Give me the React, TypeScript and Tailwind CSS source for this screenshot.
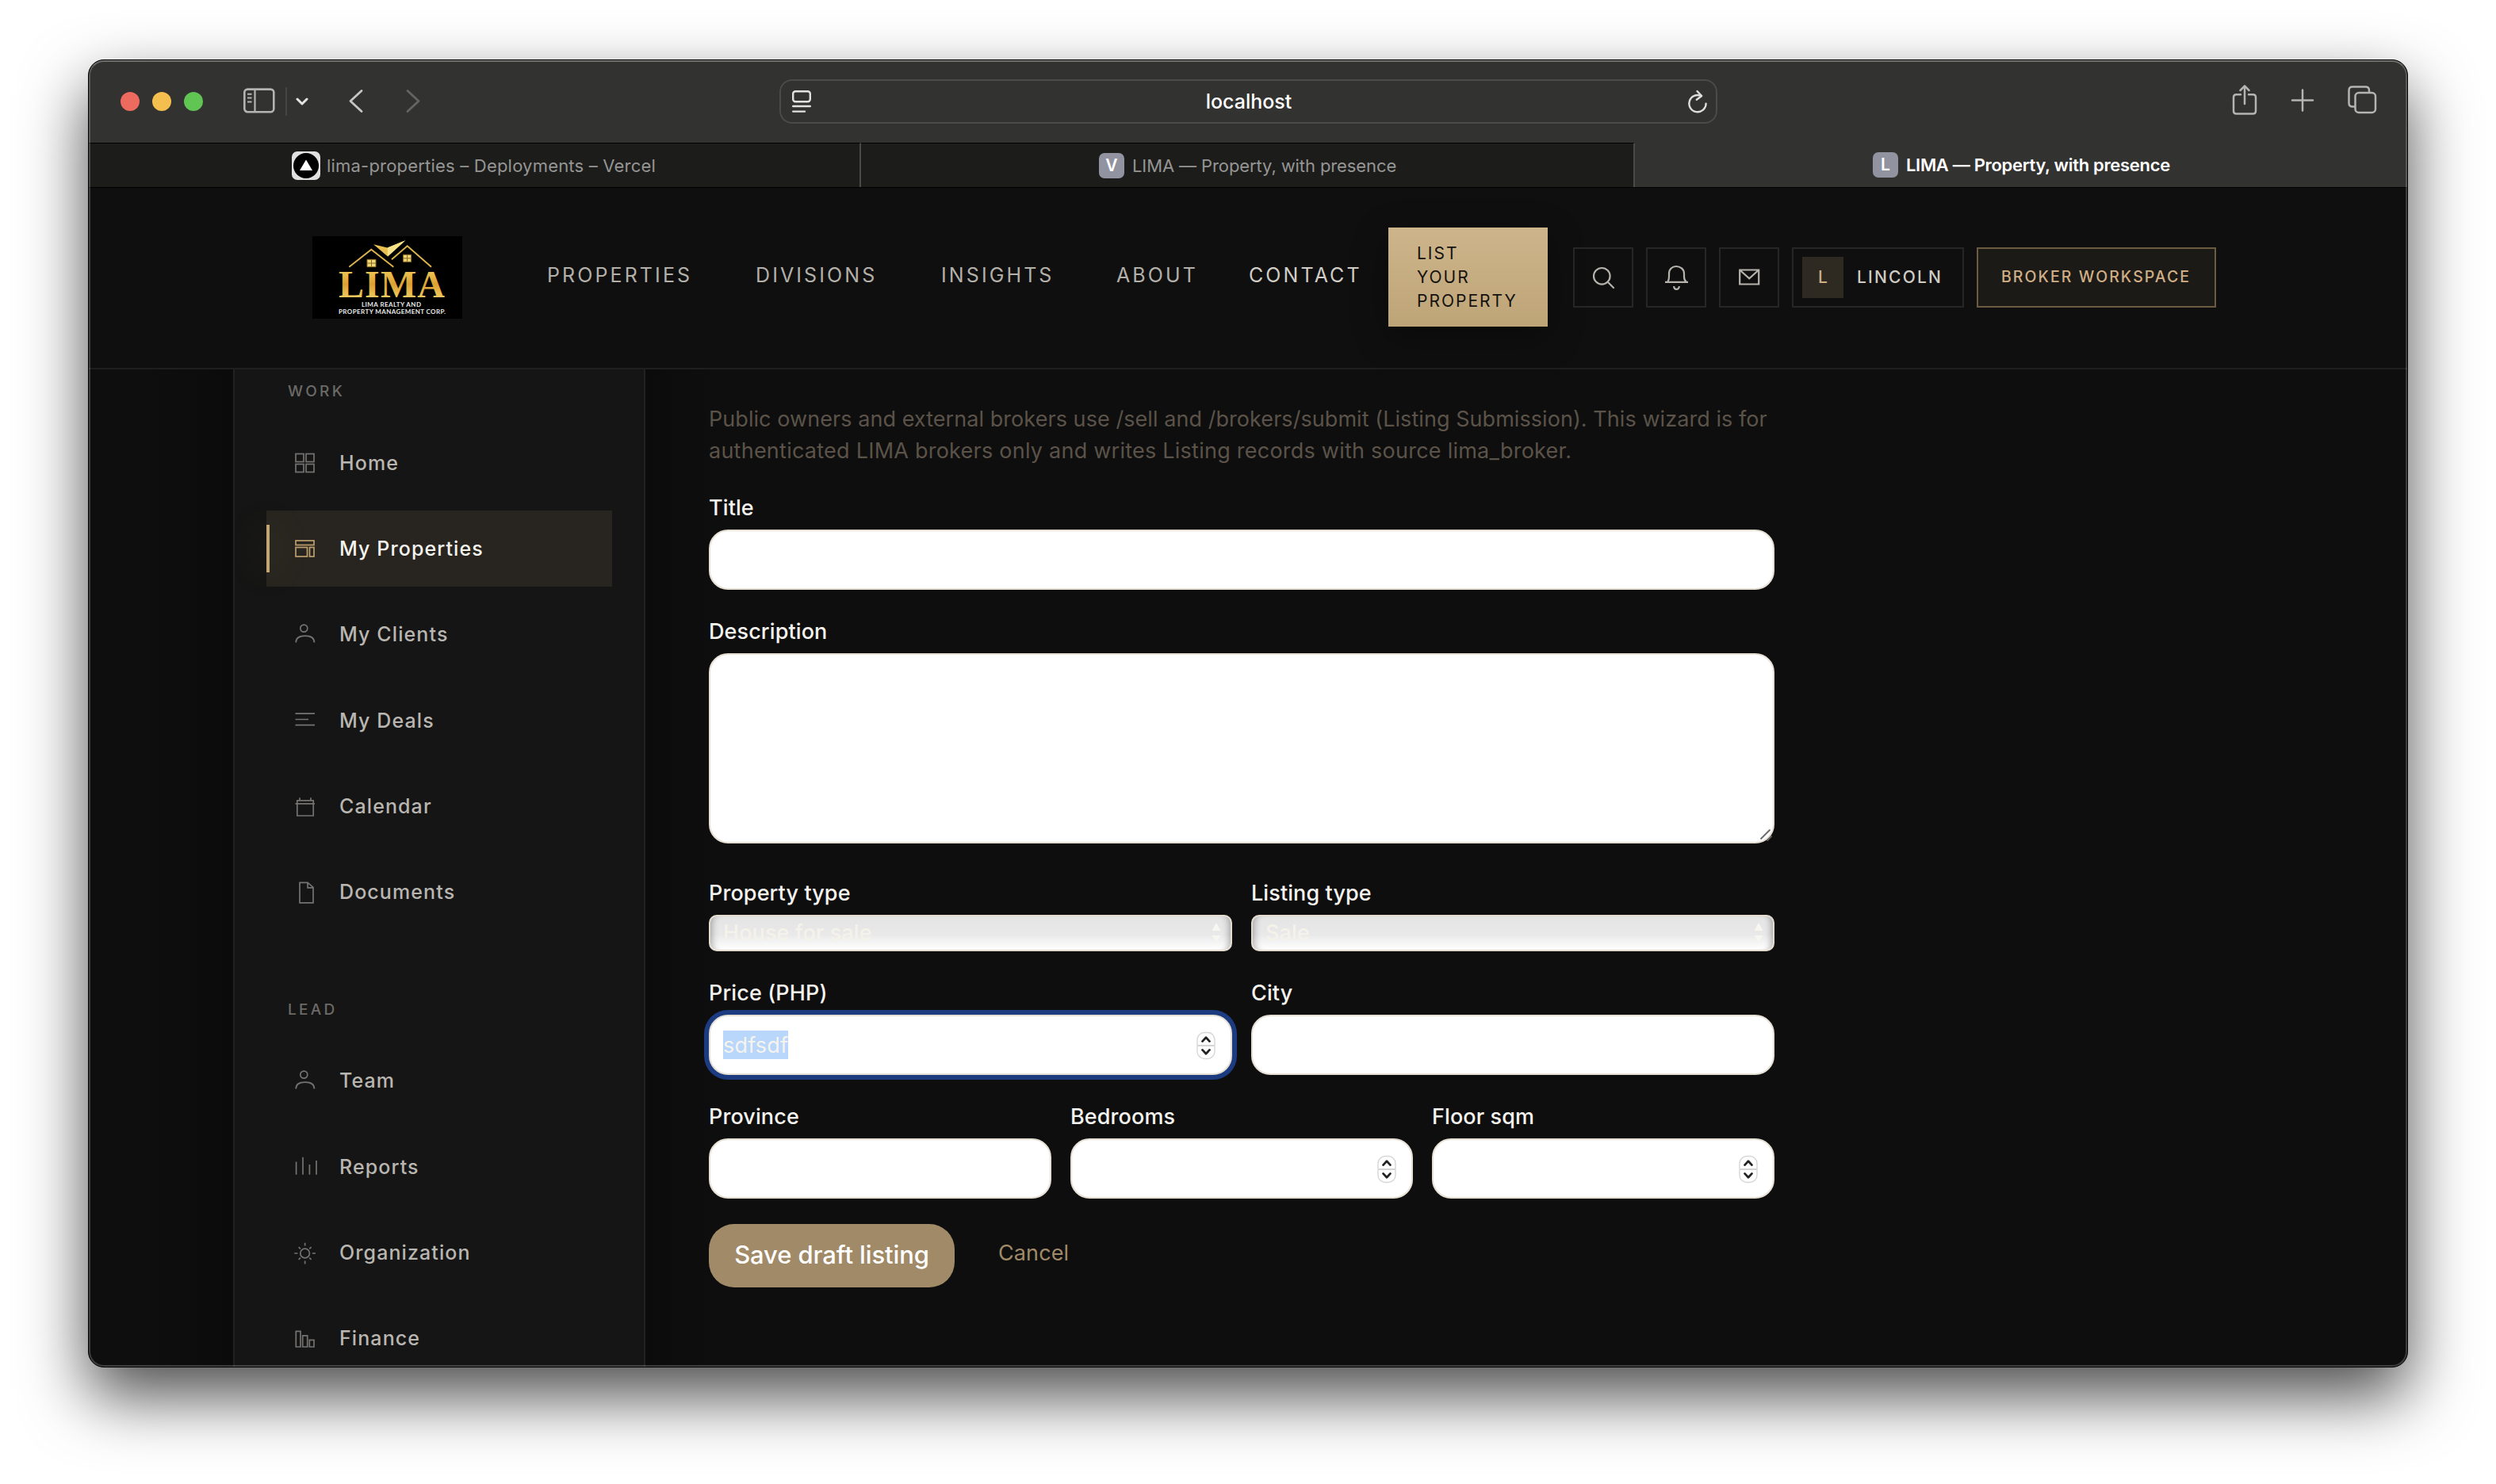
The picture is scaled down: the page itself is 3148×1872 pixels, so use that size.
import React from 'react';

const SIDEBAR_ICONS: Record<string, React.ReactNode> = {
  grid: (
    <>
      <rect x="7" y="6.5" width="10" height="10" />
      <rect x="20" y="6.5" width="10" height="10" />
      <rect x="7" y="19.5" width="10" height="10" />
      <rect x="20" y="19.5" width="10" height="10" />
    </>
  ),
  layout: (
    <>
      <rect x="7" y="8" width="23" height="5.5" />
      <rect x="7" y="16.5" width="14.5" height="11.5" />
      <rect x="24.5" y="16.5" width="5.5" height="11.5" />
    </>
  ),
  person: (
    <>
      <circle cx="17.3" cy="10.6" r="4.5" />
      <path d="M7.2 28.6C7.2 22.8 11.5 20.2 18.9 20.2S30.4 22.8 30.4 28.6" />
    </>
  ),
  lines: <path d="M6.5 10.2H31M6.5 17.5H23M6.5 24.6H31" />,
  calendar: <path d="M8.8 10.8H29.2V30H8.8ZM6.5 14.8H31M12 7.2V10.8M26 7.2V10.8" />,
  document: <path d="M12 6.3H22L29 12.4V31.8H12ZM22 6.3V12.8H29" />,
  bars: <path d="M7.6 12.6V28.8M16 6.8V28.8M24.4 16V28.8M33 11V28.8" />,
  sun: (
    <>
      <circle cx="18.6" cy="19" r="5.8" />
      <path d="M18.6 5.8V9.6M18.6 28.6V32.4M5.2 19H9.4M27.8 19H32M10.6 11.2L13 13.4M26.6 11.2L24.2 13.4M10.6 26.8L13 24.6M26.6 26.8L24.2 24.6" />
    </>
  ),
  chart: <path d="M7.3 9.3H13V29H7.3ZM15.7 14.8H21.7V29H15.7ZM24.3 20.3H30V29H24.3Z" />,
};

interface NavItem {
  label: string;
  icon: string;
  active?: boolean;
}

const WORK_ITEMS: NavItem[] = [
  { label: 'Home', icon: 'grid' },
  { label: 'My Properties', icon: 'layout', active: true },
  { label: 'My Clients', icon: 'person' },
  { label: 'My Deals', icon: 'lines' },
  { label: 'Calendar', icon: 'calendar' },
  { label: 'Documents', icon: 'document' },
];

const LEAD_ITEMS: NavItem[] = [
  { label: 'Team', icon: 'person' },
  { label: 'Reports', icon: 'bars' },
  { label: 'Organization', icon: 'sun' },
  { label: 'Finance', icon: 'chart' },
];

const BrowserToolbar: React.FC = () => (
  <div className="flex h-[104px] shrink-0 items-center bg-[#323230]">
    <div className="flex w-[871px] items-center pl-10">
      <div className="flex gap-4">
        <span className="size-6 rounded-full bg-[#ec6a5e]" />
        <span className="size-6 rounded-full bg-[#f4bf4f]" />
        <span className="size-6 rounded-full bg-[#61c554]" />
      </div>
      <svg className="ml-[50px] h-[34px] w-[42px]" viewBox="0 0 42 34" fill="none" stroke="#b4b4b2" strokeWidth="2.6">
        <rect x="2.3" y="1.6" width="37" height="28.6" rx="4" />
        <path d="M15.5 2V30" strokeWidth="2.2" />
        <path d="M6 7.8H11.5M6 12.6H11.5M6 17.4H11.5" strokeWidth="2" />
      </svg>
      <span className="ml-3 h-9 w-0.5 bg-[#454543]" />
      <svg className="ml-[11px] h-5 w-4" viewBox="0 0 16 20" fill="none" stroke="#e4e4e2" strokeWidth="3" strokeLinecap="round" strokeLinejoin="round">
        <path d="M2 7L8 13L14 7" />
      </svg>
      <svg className="ml-[50px] h-8 w-5" viewBox="0 0 20 32" fill="none" stroke="#c6c6c4" strokeWidth="2.8" strokeLinecap="round" strokeLinejoin="round">
        <path d="M17 2.5L3 15.5L17 28.5" />
      </svg>
      <svg className="ml-[52px] h-8 w-5" viewBox="0 0 20 32" fill="none" stroke="#646462" strokeWidth="2.8" strokeLinecap="round" strokeLinejoin="round">
        <path d="M3 2.5L17 15.5L3 28.5" />
      </svg>
    </div>
    <div className="flex h-14 w-[1183px] items-center justify-between rounded-2xl border-2 border-[#4b4b49] pl-3 pr-[9px]">
      <svg className="h-8 w-7" viewBox="0 0 28 32" fill="none" stroke="#e2e2e0" strokeWidth="2.4" strokeLinecap="round">
        <rect x="3.2" y="3.2" width="21.6" height="13" rx="3" />
        <path d="M3.2 22H24.8M3.2 28.6H18" />
      </svg>
      <span className="pr-0.5 pt-0.5 text-[25px] font-medium text-white">localhost</span>
      <svg className="h-8 w-7" viewBox="0 0 28 32" fill="none" stroke="#dededc" strokeWidth="2.4" strokeLinecap="round" strokeLinejoin="round">
        <path d="M24.6 18.6A10.6 10.6 0 1 1 18.5 9" />
        <path d="M13.5 3L19.2 9L12.8 13.8" />
      </svg>
    </div>
    <div className="flex flex-1 items-center justify-end gap-[41px] pr-[38px] text-[#b4b4b2]">
      <svg className="mb-1 h-[40px] w-[34px]" viewBox="0 0 34 40" fill="none" stroke="currentColor" strokeWidth="2.5" strokeLinecap="round" strokeLinejoin="round">
        <path d="M12 13.2H6.5Q3 13.2 3 16.7V34Q3 37.5 6.5 37.5H27.5Q31 37.5 31 34V16.7Q31 13.2 27.5 13.2H22" />
        <path d="M17 25V2.6M11.5 8L17 2.4L22.5 8" />
      </svg>
      <svg className="h-[34px] w-[30px]" viewBox="0 0 30 34" fill="none" stroke="currentColor" strokeWidth="2.5" strokeLinecap="round">
        <path d="M15 2.5V28.5M2 15.5H28" />
      </svg>
      <svg className="mb-1 h-[38px] w-[38px]" viewBox="0 0 38 38" fill="none" stroke="currentColor" strokeWidth="2.5" strokeLinejoin="round">
        <rect x="10.5" y="10" width="25.5" height="25" rx="4.5" />
        <path d="M10.5 27.5H7Q2.5 27.5 2.5 23V7Q2.5 2.5 7 2.5H23.5Q28 2.5 28 7V10" />
      </svg>
    </div>
  </div>
);

const BrowserTabs: React.FC = () => (
  <div className="flex h-[57px] shrink-0 border-b border-black bg-[#1c1c1b] text-[22px] text-[#959593]">
    <div className="flex w-[974px] items-center border-r-2 border-t border-r-[#4a4a48] border-t-black pl-64">
      <svg className="size-9" viewBox="0 0 36 36">
        <rect width="36" height="36" rx="7" fill="#e0e0e0" />
        <circle cx="18" cy="18" r="16" fill="#000" />
        <path d="M18 10.5L26 24H10Z" fill="#fff" />
      </svg>
      <span className="ml-2 pt-px tracking-[0.2px]">lima-properties – Deployments – Vercel</span>
    </div>
    <div className="flex w-[976px] items-center border-r-2 border-t border-r-[#4a4a48] border-t-black pl-[300px]">
      <span className="flex size-8 items-center justify-center rounded-[7px] bg-[#9293a0] text-[21px] font-semibold text-white">V</span>
      <span className="ml-[10px] pt-px tracking-[-0.1px]">LIMA — Property, with presence</span>
    </div>
    <div className="flex flex-1 items-center bg-[#323230] pl-[300px] text-white">
      <span className="flex size-8 items-center justify-center rounded-[7px] bg-[#9293a0] text-[21px] font-semibold">L</span>
      <span className="ml-[10px] pt-px font-semibold tracking-[-0.32px]">LIMA — Property, with presence</span>
    </div>
  </div>
);

const Logo: React.FC = () => (
  <svg className="h-[104px] w-[189px] bg-black" viewBox="0 0 189 104">
    <defs>
      <linearGradient id="gold" x1="0" y1="0" x2="0" y2="1">
        <stop offset="0" stopColor="#f6dc6a" />
        <stop offset="0.5" stopColor="#dda032" />
        <stop offset="1" stopColor="#f8e27a" />
      </linearGradient>
    </defs>
    <g fill="none" stroke="#dcb24c" strokeWidth="2">
      <path d="M46.3 38.7L74.3 16.7L102.3 38.7" />
      <path d="M100 29.3L119.7 12.3L150 38.7" />
    </g>
    <path d="M77 10.3L94.7 14.5L117.3 5.3L95 25.5Z" fill="#e8bf50" />
    <path d="M94.7 14.5L117.3 5.3L95 25.5Z" fill="#f8e488" />
    <g fill="#f0d878" stroke="#8a6a20" strokeWidth="1">
      <path d="M69 29.3H80V38.7H69ZM74.5 29.3V38.7M69 34H80" />
      <path d="M114.6 23.3H124.6V32.3H114.6ZM119.6 23.3V32.3M114.6 27.8H124.6" />
    </g>
    <text x="33" y="77" textLength="134" fontFamily="Liberation Serif, serif" fontWeight="700" fontSize="48" fill="url(#gold)">LIMA</text>
    <g fill="#e8e8e8" fontFamily="Lato, sans-serif" fontWeight="700" fontSize="8">
      <text x="62" y="88.6" textLength="75">LIMA REALTY AND</text>
      <text x="33" y="98.4" textLength="135">PROPERTY MANAGEMENT CORP.</text>
    </g>
  </svg>
);

const SiteHeader: React.FC = () => (
  <header className="flex h-[229px] shrink-0 items-center border-b-2 border-[#1f1f1f] bg-[#0f0f0f] pb-0.5 pl-[282px]">
    <Logo />
    <nav className="-mt-1 ml-[107px] flex text-[25px] tracking-[3.1px] text-[#b3b0aa]">
      <a className="w-[263px]">PROPERTIES</a>
      <a className="w-[234px]">DIVISIONS</a>
      <a className="w-[221px]">INSIGHTS</a>
      <a className="w-[167px]">ABOUT</a>
      <a className="w-44 text-[#d0cdc6]">CONTACT</a>
    </nav>
    <a className="flex h-[125px] w-[201px] flex-col justify-center bg-linear-to-b from-[#ceb48a] to-[#bea578] pl-9 text-[21px] leading-[30px] tracking-[2px] text-[#14120e] shadow-[0_12px_40px_rgba(0,0,0,0.35)]">
      <span>LIST</span>
      <span>YOUR</span>
      <span>PROPERTY</span>
    </a>
    <div className="ml-8 flex gap-4 text-[#b6b3ad]">
      <button className="flex size-[76px] items-center justify-center border-2 border-[#262626]">
        <svg className="size-9" viewBox="0 0 36 36" fill="none" stroke="currentColor" strokeWidth="2.2" strokeLinecap="round">
          <circle cx="16.3" cy="16.3" r="10.3" />
          <path d="M24 24L31 31" />
        </svg>
      </button>
      <button className="flex size-[76px] items-center justify-center border-2 border-[#262626]">
        <svg className="size-9" viewBox="0 0 36 36" fill="none" stroke="currentColor" strokeWidth="2.2">
          <path d="M4 23.8H33M7.4 23.5C8.6 21.5 9 20 9 17V13C9 7.5 13 4 18 4S28 7.5 28 13V17C28 20 28.4 21.5 30.6 23.5" />
          <path d="M15.2 29C15.2 34.2 21.8 34.2 21.8 29" />
        </svg>
      </button>
      <button className="flex size-[76px] items-center justify-center border-2 border-[#262626]">
        <svg className="size-9" viewBox="0 0 36 36" fill="none" stroke="currentColor" strokeWidth="2.2">
          <path d="M6.2 8.5H30.2V26.5H6.2ZM6.2 8.5L18.2 19.3L30.2 8.5" />
        </svg>
      </button>
      <button className="flex h-[76px] w-[217px] items-center border-2 border-[#262626] pl-[11px] text-[#cfccc5]">
        <span className="flex size-[52px] items-center justify-center bg-[#2e2a22] text-[21px] font-medium text-[#cfae84]">L</span>
        <span className="ml-[17px] text-[21px] font-medium tracking-[2.2px]">LINCOLN</span>
      </button>
      <button className="flex h-[76px] w-[302px] items-center border-2 border-[#6b5b3f] bg-[#1b1a16] pl-[29px] text-[19.5px] font-medium tracking-[2.05px] text-[#d0ae86]">
        BROKER WORKSPACE
      </button>
    </div>
  </header>
);

const SidebarSection: React.FC<{ title: string; items: NavItem[] }> = ({ title, items }) => (
  <div>
    <div className="mb-[27.5px] pl-[27px] text-[19px] font-medium leading-7 tracking-[3.3px] text-[#6c6a67]">{title}</div>
    <div className="flex flex-col gap-3">
      {items.map((item) => (
        <a
          key={item.label}
          className={`relative flex h-[96.25px] items-center pl-[30px] text-[25px] font-[450] tracking-[1.1px] ${
            item.active ? 'bg-[#282520] text-[#f5f3ee]' : 'text-[#b9b6b1]'
          }`}
        >
          {item.active && (
            <span className="absolute left-0 top-[18px] h-[60px] w-1 bg-[#c4a574] shadow-[0_0_48px_rgba(196,165,116,0.35)]" />
          )}
          <svg
            className={`size-9 ${item.active ? 'text-[#bd9f6e]' : 'text-[#757371]'}`}
            viewBox="0 0 36 36"
            fill="none"
            stroke="currentColor"
            strokeWidth="1.7"
          >
            {SIDEBAR_ICONS[item.icon]}
          </svg>
          <span className="ml-[26px] pt-0.5">{item.label}</span>
        </a>
      ))}
    </div>
  </div>
);

const Stepper: React.FC = () => (
  <svg className="mt-px h-[40px] w-[26px]" viewBox="0 0 26 40" fill="none">
    <rect x="2" y="3.5" width="22" height="33" rx="9" fill="#fff" stroke="#d6d6d6" strokeWidth="1.4" />
    <path d="M2.5 20H23.5" stroke="#d4d4d4" strokeWidth="2" />
    <path d="M8.5 14.6L13 9.8L17.5 14.6M8.5 25.4L13 30.2L17.5 25.4" stroke="#222" strokeWidth="2.8" strokeLinecap="round" strokeLinejoin="round" />
  </svg>
);

interface FieldProps {
  label: string;
  value?: string;
  numeric?: boolean;
  focused?: boolean;
}

const Field: React.FC<FieldProps> = ({ label, value, numeric, focused }) => (
  <label className="flex flex-1 flex-col gap-[7px]">
    <span className="pt-px">{label}</span>
    <div
      className={`flex h-[76px] items-center rounded-3xl border-2 border-[#e6dfd4] bg-white pl-4 pr-[18px] ${
        focused ? 'ring-6 ring-[#1d3b80]' : ''
      }`}
    >
      {value && <span className="h-9 bg-[#b9d6fb] text-[27px] font-normal leading-[37px] tracking-[0.2px] text-[#f5f3ee]">{value}</span>}
      {numeric && (
        <span className="ml-auto">
          <Stepper />
        </span>
      )}
    </div>
  </label>
);

const SelectField: React.FC<{ label: string; value: string }> = ({ label, value }) => (
  <label className="flex flex-1 flex-col gap-[7px]">
    <span className="pt-px">{label}</span>
    <div className="flex h-[46px] items-center justify-between rounded-[10px] border-2 border-[#e4dccf] bg-linear-to-b from-[#e4e4e4] via-[#e9e9e9] via-55% to-white pl-4 pr-3 shadow-[inset_10px_0_8px_-8px_rgba(0,0,0,0.3),inset_-10px_0_8px_-8px_rgba(0,0,0,0.3)]">
      <span className="font-[450] text-[#f5f2ea]">{value}</span>
      <svg className="h-7 w-3" viewBox="0 0 12 28" fill="#f8f6f0">
        <path d="M6 1L11.5 11H0.5ZM6 26L11.5 17H0.5Z" />
      </svg>
    </div>
  </label>
);

const ListingForm: React.FC = () => (
  <form className="flex w-[1344px] flex-col text-[27px] font-[450] leading-10 tracking-[0.1px] text-[#f5f3ee]">
    <div className="mb-[31px] whitespace-nowrap pt-px font-normal text-[#5b5349]">
      <p className="tracking-[0.06px]">
        Public owners and external brokers use /sell and /brokers/submit (Listing Submission). This wizard is for
      </p>
      <p className="tracking-[0.24px]">
        authenticated LIMA brokers only and writes Listing records with source lima_broker.
      </p>
    </div>
    <div className="flex">
      <Field label="Title" />
    </div>
    <label className="mt-8 flex flex-col gap-[7px]">
      <span className="pt-px">Description</span>
      <div className="relative h-60 rounded-3xl border-2 border-[#e6dfd4] bg-white">
        <svg className="absolute -bottom-px -right-px size-5" viewBox="0 0 20 20" stroke="#69696c" strokeWidth="1.8">
          <path d="M3.5 15.5L15.5 3.5M11.5 17.5L17.5 11.5" />
        </svg>
      </div>
    </label>
    <div className="mt-[42px] flex gap-6">
      <SelectField label="Property type" value="House for sale" />
      <SelectField label="Listing type" value="Sale" />
    </div>
    <div className="mt-8 flex gap-6">
      <Field label="Price (PHP)" value="sdfsdf" numeric focused />
      <Field label="City" />
    </div>
    <div className="mt-8 flex gap-6">
      <Field label="Province" />
      <Field label="Bedrooms" numeric />
      <Field label="Floor sqm" numeric />
    </div>
    <div className="mt-8 flex h-20 items-center">
      <button type="button" className="h-20 w-[310px] rounded-[32px] bg-[#a18a68] pb-0.5 text-[31px] font-medium tracking-[-0.1px] text-white">
        Save draft listing
      </button>
      <a className="mb-1.5 ml-[55px] font-normal text-[#a18a68]">Cancel</a>
    </div>
  </form>
);

export default function App() {
  return (
    <div className="h-[1872px] w-[3148px] overflow-hidden bg-white pl-[111px] pt-[75px] font-[Inter,sans-serif]">
      <div className="relative flex h-[1650px] w-[2926px] flex-col overflow-hidden rounded-[20px] border border-black bg-[#0e0e0e] shadow-[0_36px_82px_rgba(0,0,0,0.7)]">
        <BrowserToolbar />
        <BrowserTabs />
        <SiteHeader />
        <div className="flex min-h-0 flex-1">
          <div className="w-[182px] shrink-0 bg-linear-to-r from-[#0e0e0e] from-40% to-[#0b0b0b]" />
          <aside className="flex w-[520px] shrink-0 flex-col gap-[86.5px] overflow-hidden border-x-2 border-[#212121] bg-[#151515] px-10 pt-[14px]">
            <SidebarSection title="WORK" items={WORK_ITEMS} />
            <SidebarSection title="LEAD" items={LEAD_ITEMS} />
          </aside>
          <main className="flex-1 bg-linear-to-r from-[#0b0b0b] to-[#0e0e0e] to-4% pl-20 pt-[42px]">
            <ListingForm />
          </main>
        </div>
        <div className="pointer-events-none absolute inset-0 rounded-[19px] border-2 border-white/20 border-t-white/30" />
      </div>
    </div>
  );
}
